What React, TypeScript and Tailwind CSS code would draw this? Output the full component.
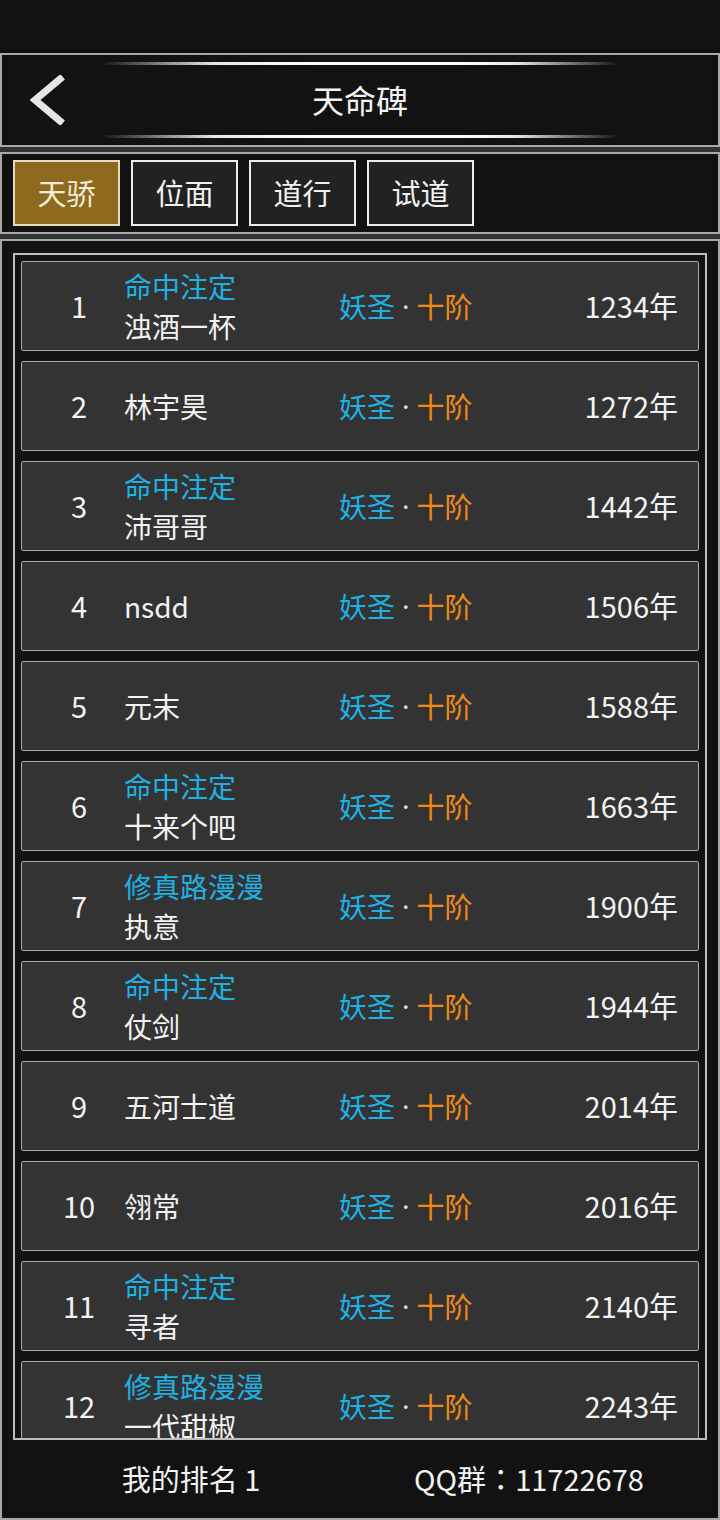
import React from 'react';

interface RankEntry {
  rank: number;
  title?: string;
  name: string;
  years: number;
}

const entries: RankEntry[] = [
  { rank: 1, title: '命中注定', name: '浊酒一杯', years: 1234 },
  { rank: 2, name: '林宇昊', years: 1272 },
  { rank: 3, title: '命中注定', name: '沛哥哥', years: 1442 },
  { rank: 4, name: 'nsdd', years: 1506 },
  { rank: 5, name: '元末', years: 1588 },
  { rank: 6, title: '命中注定', name: '十来个吧', years: 1663 },
  { rank: 7, title: '修真路漫漫', name: '执意', years: 1900 },
  { rank: 8, title: '命中注定', name: '仗剑', years: 1944 },
  { rank: 9, name: '五河士道', years: 2014 },
  { rank: 10, name: '翎常', years: 2016 },
  { rank: 11, title: '命中注定', name: '寻者', years: 2140 },
  { rank: 12, title: '修真路漫漫', name: '一代甜椒', years: 2243 },
];

const tabs = ['天骄', '位面', '道行', '试道'];

function GlowLine() {
  return (
    <div className="mx-auto h-[3px] w-[520px] rounded-full bg-[linear-gradient(90deg,rgba(255,255,255,0)_0%,rgba(255,255,255,0.9)_22%,#fff_40%,#fff_70%,rgba(255,255,255,0.9)_80%,rgba(255,255,255,0)_100%)]" />
  );
}

function RankRow({ entry }: { entry: RankEntry }) {
  return (
    <div className="flex h-[90px] shrink-0 items-center rounded-[2px] border border-[#a9a9a9] bg-[#333333] text-[28px]">
      <div className="ml-[16px] w-[82px] text-center text-[29px] text-[#f2f2f2]">{entry.rank}</div>
      <div className="ml-[4px] flex w-[215px] flex-col leading-[40px]">
        {entry.title && <span className="text-[#1fb1e3]">{entry.title}</span>}
        <span className="text-[#f2f2f2]">{entry.name}</span>
      </div>
      <div className="flex items-center">
        <span className="text-[#1fb1e3]">妖圣</span>
        <span className="px-[7px] font-['Noto_Sans'] text-[#e0e0e0]">·</span>
        <span className="text-[#f28a18]">十阶</span>
      </div>
      <div className="ml-auto pr-[20px] text-[29px] text-[#f2f2f2]">{entry.years}年</div>
    </div>
  );
}

export default function App() {
  return (
    <div
      className="flex h-[1520px] w-[720px] flex-col overflow-hidden bg-[#121212]"
      style={{ fontFamily: '"Noto Sans CJK SC", "Noto Sans", sans-serif' }}
    >
      <div className="h-[53px] shrink-0" />

      {/* header */}
      <div className="flex h-[94px] shrink-0 flex-col justify-between border-2 border-[#a8a8a8] bg-[#121212] py-[7px]">
        <GlowLine />
        <div className="relative flex items-center justify-center">
          <svg
            className="absolute left-[25px] top-1/2 -translate-y-1/2"
            width="40"
            height="50"
            viewBox="0 0 40 50"
          >
            <polyline
              points="33,4 8,25 33,46"
              fill="none"
              stroke="#e6e6e6"
              strokeWidth="7"
              strokeLinecap="square"
            />
          </svg>
          <span className="-mt-[3px] text-[32px] leading-[44px] text-[#f4f4f4]">天命碑</span>
        </div>
        <GlowLine />
      </div>

      <div className="h-[5px] shrink-0 bg-[#333333]" />

      {/* tabs */}
      <div className="flex h-[82px] shrink-0 items-center gap-[11px] border-2 border-[#a8a8a8] bg-[#121212] px-[11px]">
        {tabs.map((tab, i) => (
          <div
            key={tab}
            className={
              i === 0
                ? 'flex h-[66px] w-[107px] items-center justify-center border-2 border-[#e9dcc0] bg-[#8e6a1f] text-[29px] text-[#f4ecd8]'
                : 'flex h-[66px] w-[107px] items-center justify-center border-2 border-[#ececec] bg-[#222222] text-[29px] text-[#f2f2f2]'
            }
          >
            {tab}
          </div>
        ))}
      </div>

      <div className="h-[5px] shrink-0 bg-[#333333]" />

      {/* list panel */}
      <div className="flex min-h-0 flex-1 flex-col border-2 border-[#a8a8a8] bg-[#121212] px-[11px] pt-[12px]">
        <div className="flex h-[1187px] shrink-0 flex-col gap-[10px] overflow-hidden border-2 border-[#bdbdbd] px-[6px] pt-[6px]">
          {entries.map((e) => (
            <RankRow key={e.rank} entry={e} />
          ))}
        </div>
        <div className="-mx-[11px] grid flex-1 grid-cols-2 items-center px-[20px] text-[29px] text-[#f2f2f2]">
          <div className="text-center">我的排名 1</div>
          <div className="text-center">
            QQ群<span className="font-['Noto_Sans_CJK_TC']">：</span>11722678
          </div>
        </div>
      </div>
    </div>
  );
}
